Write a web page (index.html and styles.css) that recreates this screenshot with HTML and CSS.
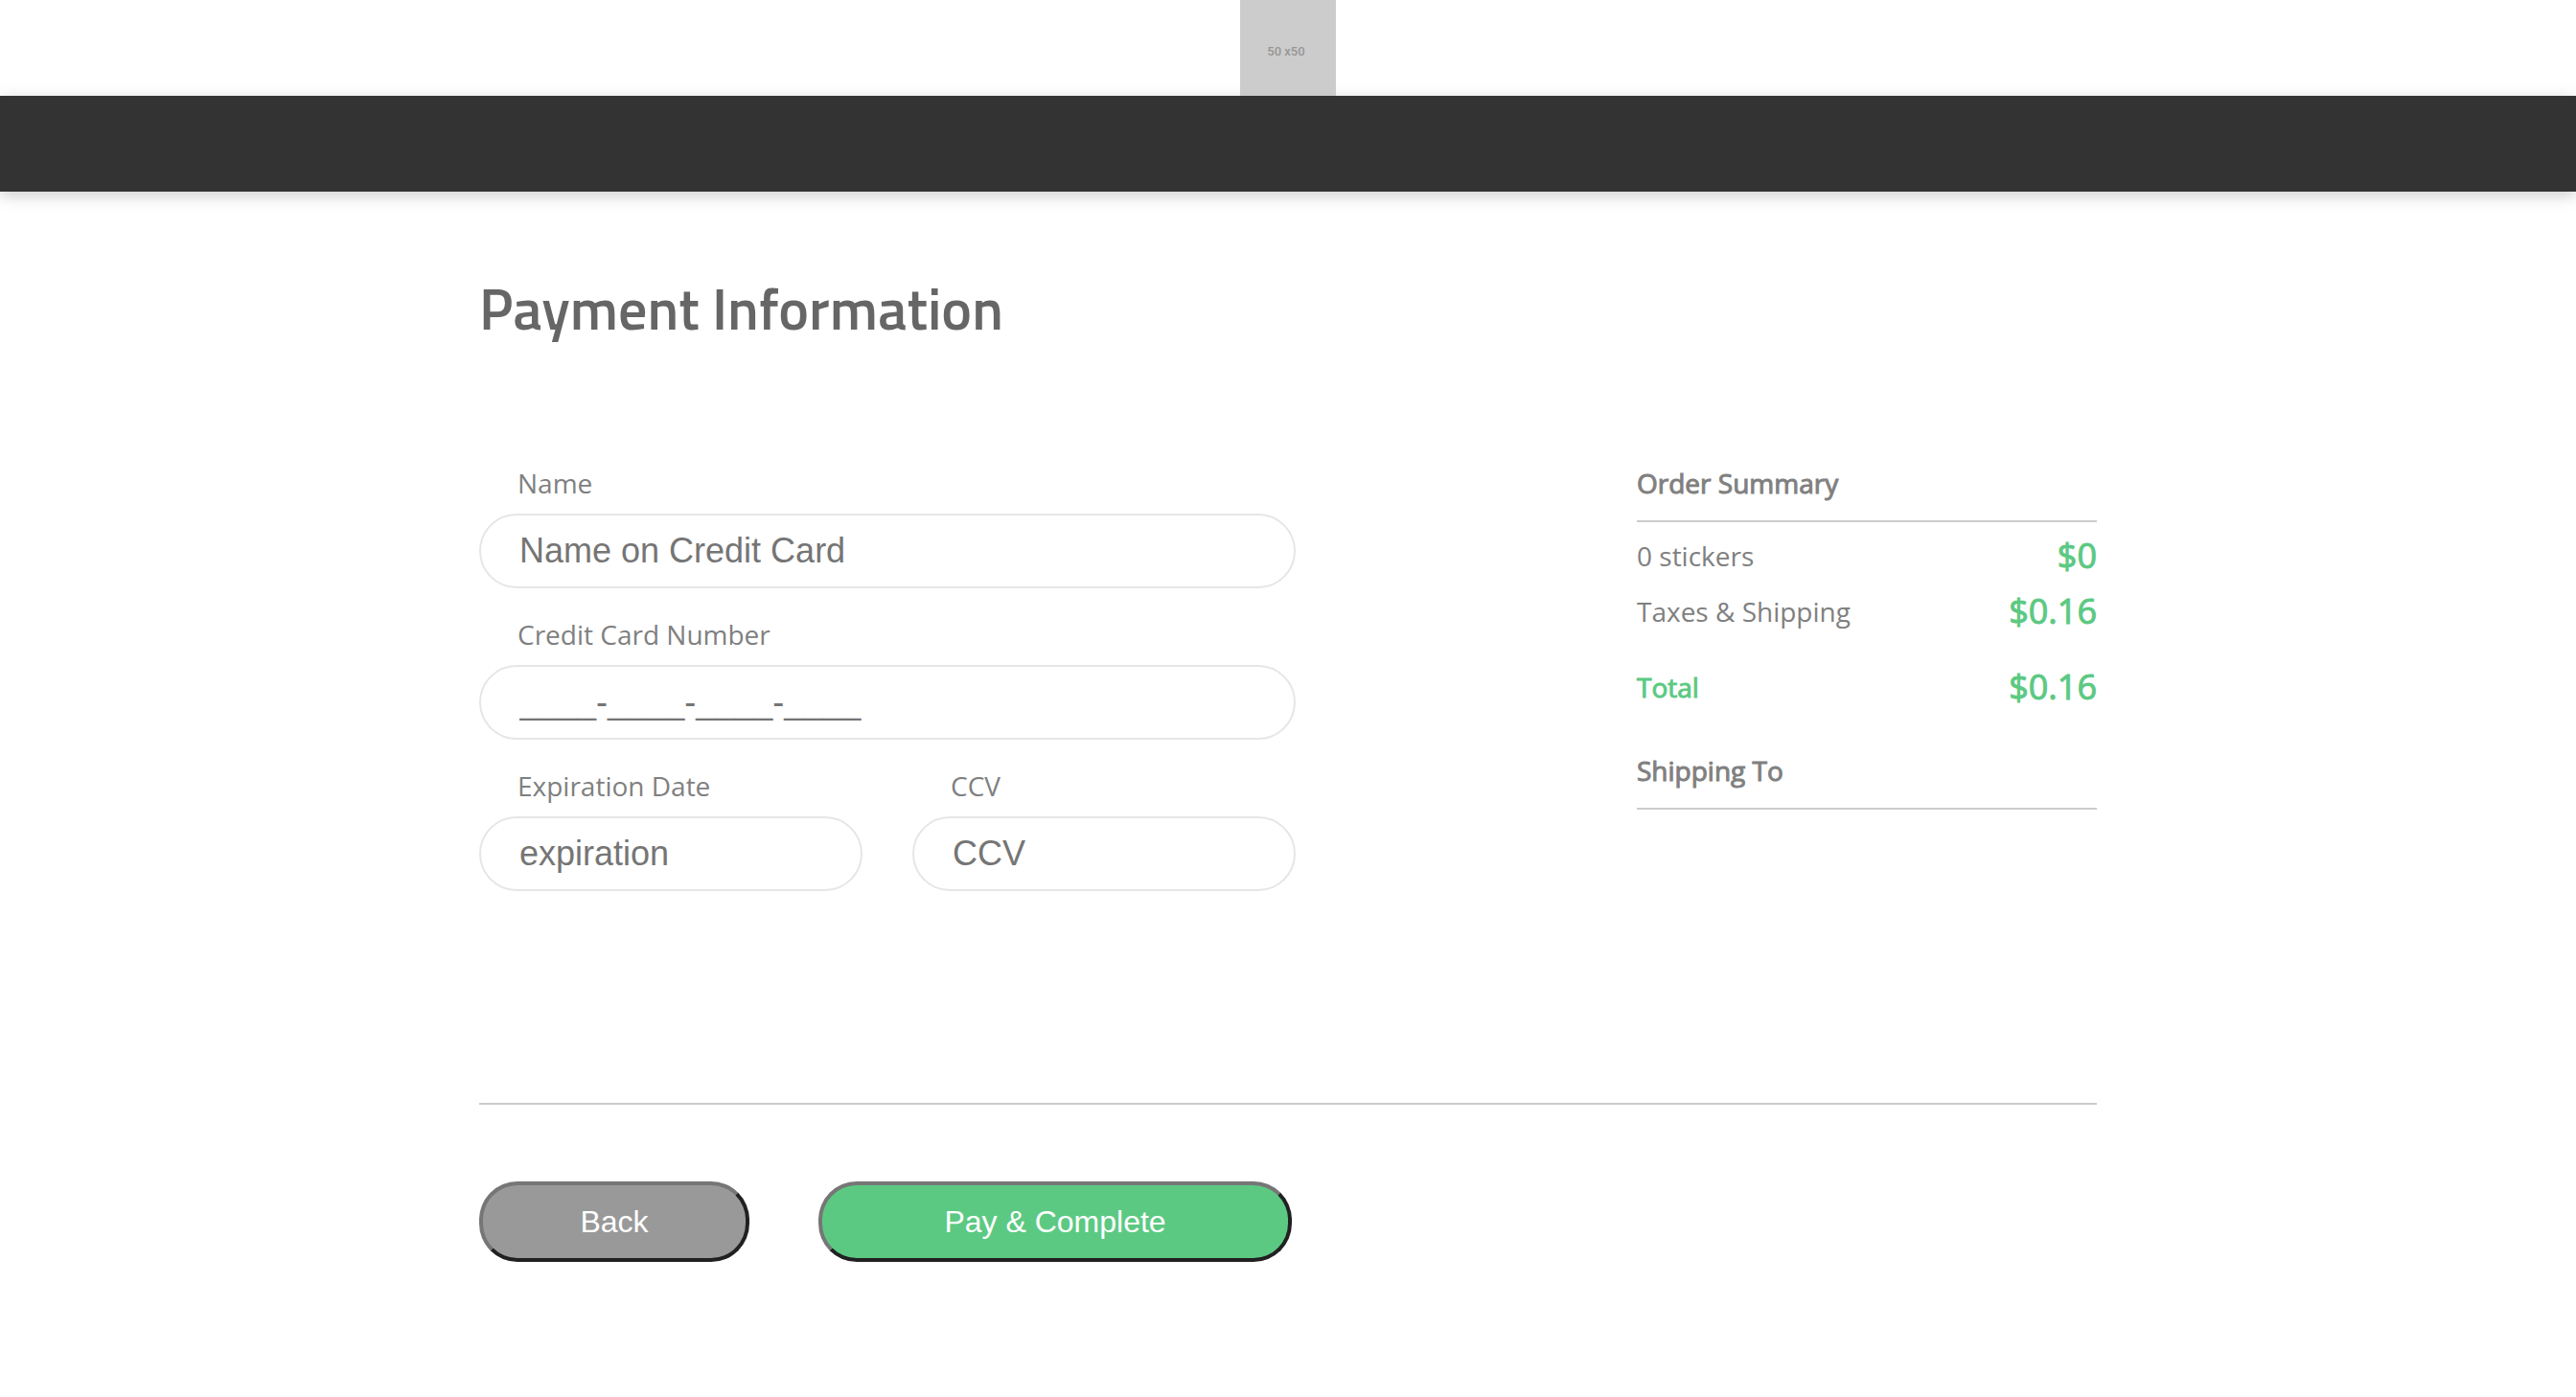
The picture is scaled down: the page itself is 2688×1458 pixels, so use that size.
FILE: index.html
```html
<!DOCTYPE html>
<html lang="en">
<head>
  <meta charset="utf-8">
  <meta name="viewport" content="width=device-width, initial-scale=1">
  <title>Payment Information</title>
  <link rel="stylesheet" href="styles.css">
</head>
<body>
  <header class="site-header">
    <div class="logo">50 x50</div>
  </header>
  <nav class="navbar" aria-label="Main"></nav>

  <main class="page">
    <h1 class="page-title">Payment Information</h1>

    <form class="checkout">
      <div class="columns">
        <div class="fields">
          <div class="field">
            <label class="field-label" for="name">Name</label>
            <input class="field-input" id="name" type="text" placeholder="Name on Credit Card">
          </div>
          <div class="field">
            <label class="field-label" for="card">Credit Card Number</label>
            <input class="field-input" id="card" type="text" placeholder="____-____-____-____">
          </div>
          <div class="field-pair">
            <div class="field">
              <label class="field-label" for="expiration">Expiration Date</label>
              <input class="field-input" id="expiration" type="text" placeholder="expiration">
            </div>
            <div class="field">
              <label class="field-label" for="ccv">CCV</label>
              <input class="field-input" id="ccv" type="text" placeholder="CCV">
            </div>
          </div>
        </div>

        <aside class="summary">
          <h2 class="summary-title">Order Summary</h2>
          <dl class="summary-list">
            <div class="summary-row">
              <dt>0 stickers</dt>
              <dd class="price">$0</dd>
            </div>
            <div class="summary-row">
              <dt>Taxes &amp; Shipping</dt>
              <dd class="price">$0.16</dd>
            </div>
            <div class="summary-row total">
              <dt>Total</dt>
              <dd class="price">$0.16</dd>
            </div>
          </dl>
          <h2 class="summary-title">Shipping To</h2>
        </aside>
      </div>

      <div class="actions">
        <button class="button button-back" type="button">Back</button>
        <button class="button button-pay" type="submit">Pay &amp; Complete</button>
      </div>
    </form>
  </main>
</body>
</html>
```

FILE: styles.css
```css
* {
  box-sizing: border-box;
}

body {
  margin: 0;
  background: #fff;
  color: #808080;
  font-family: "Open Sans", "Noto Sans", sans-serif;
  font-size: 28px;
  line-height: 40px;
}

.site-header {
  display: flex;
  justify-content: center;
}

.logo {
  position: relative;
  z-index: 1;
  display: flex;
  align-items: center;
  justify-content: center;
  width: 100px;
  height: 100px;
  padding-top: 6px;
  padding-right: 4px;
  background: #ccc;
  color: #969696;
  font: 500 13px Roboto, sans-serif;
  white-space: nowrap;
}

.navbar {
  position: relative;
  height: 100px;
  background: #333;
  box-shadow: 0 4px 16px rgba(0, 0, 0, 0.2);
}

.page {
  max-width: 1768px;
  margin: 0 auto;
  padding: 77px 40px 140px;
}

.page-title {
  margin: 0 0 117px;
  color: #666;
  font-family: "Titillium Web", Roboto, sans-serif;
  font-size: 60px;
  font-weight: 600;
  line-height: 90px;
}

.columns {
  display: flex;
  flex-wrap: wrap;
  justify-content: space-between;
  gap: 40px;
  padding-bottom: 221px;
  border-bottom: 2px solid #ccc;
}

.fields {
  display: flex;
  flex: 0 1 852px;
  flex-direction: column;
  gap: 28px;
}

.field-pair {
  display: grid;
  grid-template-columns: 1fr 1fr;
  gap: 52px;
}

.field {
  display: flex;
  flex-direction: column;
  gap: 12px;
  min-width: 0;
}

.field-label {
  padding-left: 40px;
}

.field-input {
  width: 100%;
  height: 78px;
  padding: 0 40px;
  border: 2px solid #e6e6e6;
  border-radius: 40px;
  background: transparent;
  color: #333;
  font-family: "Liberation Sans", Arial, sans-serif;
  font-size: 36px;
}

.field-input::placeholder {
  color: #757575;
  opacity: 1;
}

.summary {
  flex: 0 1 480px;
}

.summary-title {
  margin: 0;
  padding-bottom: 19px;
  border-bottom: 2px solid #ccc;
  font-size: 28px;
  font-weight: 400;
  line-height: 40px;
  -webkit-text-stroke: 1px;
}

.summary-list {
  margin: 0;
  padding: 6px 0 38px;
}

.summary-row {
  display: flex;
  align-items: center;
  justify-content: space-between;
  line-height: 58px;
}

.summary-row dd {
  margin: 0;
}

.price {
  color: #5cc983;
  font-size: 36px;
  -webkit-text-stroke: 1px;
}

.total {
  margin-top: 21px;
  color: #5cc983;
  -webkit-text-stroke: 1px;
}

.actions {
  display: flex;
  flex-wrap: wrap;
  gap: 72px;
  padding-top: 80px;
}

.button {
  height: 84px;
  padding: 0;
  border: 4px solid;
  border-color: #767676 #212121 #212121 #767676;
  border-radius: 40px;
  color: #fff;
  font-family: "Liberation Sans", Arial, sans-serif;
  font-size: 32px;
}

.button-back {
  width: 282px;
  background: #999;
}

.button-pay {
  width: 494px;
  background: #5cc983;
}
```
